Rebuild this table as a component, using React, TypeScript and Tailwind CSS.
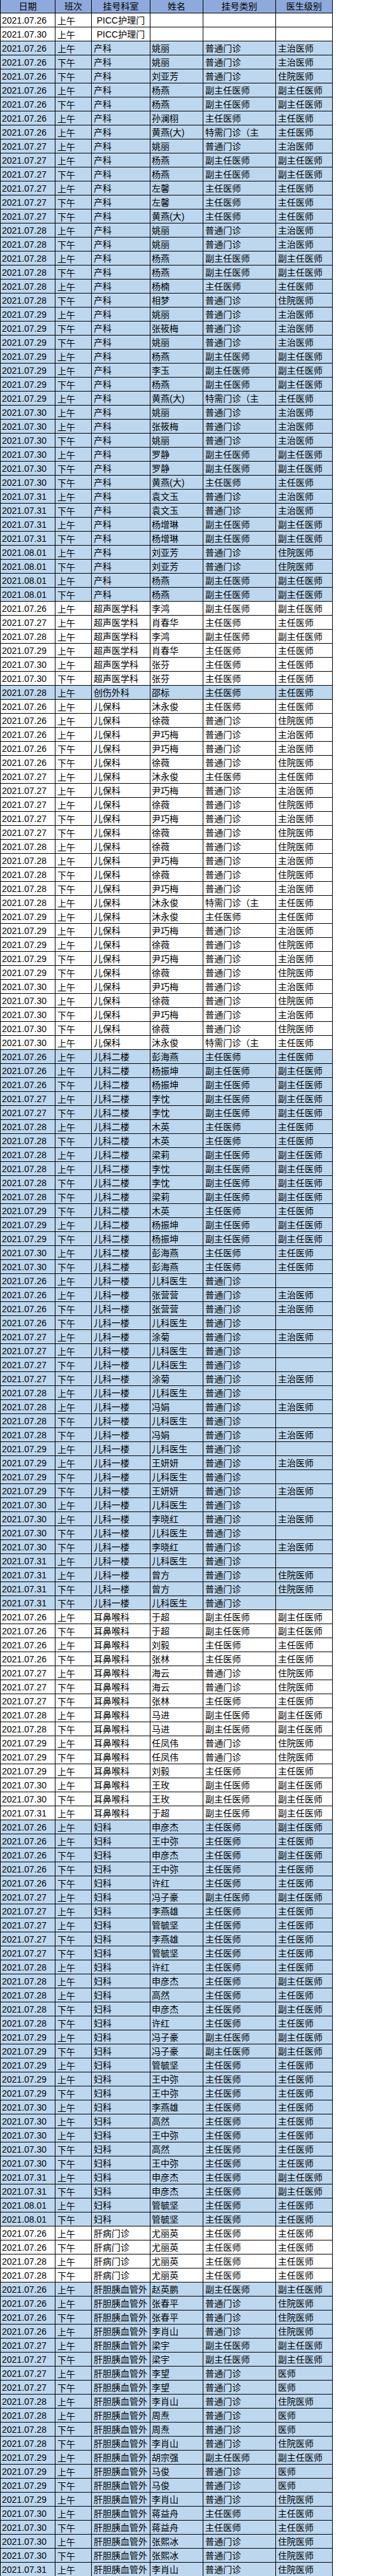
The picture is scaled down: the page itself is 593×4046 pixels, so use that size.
import React from "react";

const TYPE: Record<string, string> = {
  P: "普通门诊",
  F: "副主任医师",
  Z: "主任医师",
  T: "特需门诊（主",
  "-": "",
};
const LEVEL: Record<string, string> = {
  C: "主治医师",
  Y: "住院医师",
  F: "副主任医师",
  Z: "主任医师",
  D: "医师",
  "-": "",
};

const RAW = `07.26,上,PICC护理门,,-,-
07.30,上,PICC护理门,,-,-
07.26,上,产科,姚丽,P,C
07.26,下,产科,姚丽,P,C
07.26,下,产科,刘亚芳,P,Y
07.26,上,产科,杨燕,F,F
07.26,下,产科,杨燕,F,F
07.26,上,产科,孙澜栩,Z,Z
07.26,上,产科,黄燕(大),T,Z
07.27,上,产科,姚丽,P,C
07.27,上,产科,杨燕,F,F
07.27,下,产科,杨燕,F,F
07.27,上,产科,左馨,Z,Z
07.27,下,产科,左馨,Z,Z
07.27,下,产科,黄燕(大),Z,Z
07.28,上,产科,姚丽,P,C
07.28,下,产科,姚丽,P,C
07.28,上,产科,杨燕,F,F
07.28,下,产科,杨燕,F,F
07.28,上,产科,杨楠,Z,Z
07.28,下,产科,相梦,P,Y
07.29,上,产科,姚丽,P,C
07.29,下,产科,张筱梅,P,C
07.29,下,产科,姚丽,P,C
07.29,上,产科,杨燕,F,F
07.29,上,产科,李玉,F,F
07.29,下,产科,杨燕,F,F
07.29,上,产科,黄燕(大),T,Z
07.30,上,产科,姚丽,P,C
07.30,上,产科,张筱梅,P,C
07.30,下,产科,姚丽,P,C
07.30,上,产科,罗静,F,F
07.30,下,产科,罗静,F,F
07.30,下,产科,黄燕(大),Z,Z
07.31,上,产科,袁文玉,P,C
07.31,下,产科,袁文玉,P,C
07.31,上,产科,杨增琳,F,F
07.31,下,产科,杨增琳,F,F
08.01,上,产科,刘亚芳,P,Y
08.01,下,产科,刘亚芳,P,Y
08.01,上,产科,杨燕,F,F
08.01,下,产科,杨燕,F,F
07.26,上,超声医学科,李鸿,F,F
07.27,上,超声医学科,肖春华,Z,Z
07.28,上,超声医学科,李鸿,F,F
07.29,上,超声医学科,肖春华,Z,Z
07.30,上,超声医学科,张芬,Z,Z
07.30,下,超声医学科,张芬,Z,Z
07.28,上,创伤外科,邵标,Z,Z
07.26,上,儿保科,沐永俊,Z,Z
07.26,上,儿保科,徐薇,P,Y
07.26,上,儿保科,尹巧梅,P,C
07.26,下,儿保科,尹巧梅,P,C
07.26,下,儿保科,徐薇,P,Y
07.27,上,儿保科,沐永俊,Z,Z
07.27,上,儿保科,尹巧梅,P,C
07.27,上,儿保科,徐薇,P,Y
07.27,下,儿保科,尹巧梅,P,C
07.27,下,儿保科,徐薇,P,Y
07.28,上,儿保科,徐薇,P,Y
07.28,上,儿保科,尹巧梅,P,C
07.28,下,儿保科,徐薇,P,Y
07.28,下,儿保科,尹巧梅,P,C
07.28,上,儿保科,沐永俊,T,Z
07.29,上,儿保科,沐永俊,Z,Z
07.29,上,儿保科,尹巧梅,P,C
07.29,上,儿保科,徐薇,P,Y
07.29,下,儿保科,尹巧梅,P,C
07.29,下,儿保科,徐薇,P,Y
07.30,上,儿保科,尹巧梅,P,C
07.30,上,儿保科,徐薇,P,Y
07.30,下,儿保科,尹巧梅,P,C
07.30,下,儿保科,徐薇,P,Y
07.30,上,儿保科,沐永俊,T,Z
07.26,上,儿科二楼,彭海燕,Z,Z
07.26,上,儿科二楼,杨振坤,F,F
07.26,下,儿科二楼,杨振坤,F,F
07.27,上,儿科二楼,李忱,F,F
07.27,下,儿科二楼,李忱,F,F
07.28,上,儿科二楼,木英,Z,Z
07.28,下,儿科二楼,木英,Z,Z
07.28,上,儿科二楼,梁莉,F,F
07.28,上,儿科二楼,李忱,F,F
07.28,下,儿科二楼,李忱,F,F
07.28,下,儿科二楼,梁莉,F,F
07.29,下,儿科二楼,木英,Z,Z
07.29,上,儿科二楼,杨振坤,F,F
07.29,下,儿科二楼,杨振坤,F,F
07.30,上,儿科二楼,彭海燕,Z,Z
07.30,下,儿科二楼,彭海燕,Z,Z
07.26,上,儿科一楼,儿科医生,P,-
07.26,上,儿科一楼,张营营,P,C
07.26,下,儿科一楼,张营营,P,C
07.26,下,儿科一楼,儿科医生,P,-
07.27,上,儿科一楼,涂菊,P,C
07.27,上,儿科一楼,儿科医生,P,-
07.27,下,儿科一楼,儿科医生,P,-
07.27,下,儿科一楼,涂菊,P,C
07.28,上,儿科一楼,儿科医生,P,-
07.28,上,儿科一楼,冯娟,P,C
07.28,下,儿科一楼,儿科医生,P,-
07.28,下,儿科一楼,冯娟,P,C
07.29,上,儿科一楼,儿科医生,P,-
07.29,上,儿科一楼,王妍妍,P,C
07.29,下,儿科一楼,儿科医生,P,-
07.29,下,儿科一楼,王妍妍,P,C
07.30,上,儿科一楼,儿科医生,P,-
07.30,上,儿科一楼,李晓红,P,C
07.30,下,儿科一楼,儿科医生,P,-
07.30,下,儿科一楼,李晓红,P,C
07.31,上,儿科一楼,儿科医生,P,-
07.31,上,儿科一楼,曾方,P,Y
07.31,下,儿科一楼,曾方,P,Y
07.31,下,儿科一楼,儿科医生,P,-
07.26,上,耳鼻喉科,于超,F,F
07.26,下,耳鼻喉科,于超,F,F
07.26,上,耳鼻喉科,刘毅,Z,Z
07.26,下,耳鼻喉科,张林,Z,Z
07.27,上,耳鼻喉科,海云,P,Y
07.27,下,耳鼻喉科,海云,P,Y
07.27,下,耳鼻喉科,张林,Z,Z
07.28,上,耳鼻喉科,马进,F,F
07.28,下,耳鼻喉科,马进,F,F
07.29,上,耳鼻喉科,任凤伟,P,Y
07.29,下,耳鼻喉科,任凤伟,P,Y
07.29,上,耳鼻喉科,刘毅,Z,Z
07.30,上,耳鼻喉科,王玫,F,F
07.30,下,耳鼻喉科,王玫,F,F
07.31,上,耳鼻喉科,于超,F,F
07.26,上,妇科,申彦杰,Z,F
07.26,上,妇科,王中弥,Z,Z
07.26,下,妇科,申彦杰,Z,F
07.26,下,妇科,王中弥,Z,Z
07.26,下,妇科,许红,Z,Z
07.27,上,妇科,冯子豪,F,F
07.27,上,妇科,李燕雄,Z,Z
07.27,上,妇科,管毓坚,Z,Z
07.27,下,妇科,李燕雄,Z,Z
07.27,下,妇科,管毓坚,Z,Z
07.28,上,妇科,许红,Z,Z
07.28,上,妇科,申彦杰,Z,F
07.28,上,妇科,高然,Z,Z
07.28,下,妇科,申彦杰,Z,F
07.28,下,妇科,许红,Z,Z
07.29,上,妇科,冯子豪,F,F
07.29,下,妇科,冯子豪,F,F
07.29,上,妇科,管毓坚,Z,Z
07.29,上,妇科,王中弥,Z,Z
07.29,下,妇科,王中弥,Z,Z
07.30,上,妇科,李燕雄,Z,Z
07.30,上,妇科,高然,Z,Z
07.30,上,妇科,王中弥,Z,Z
07.30,下,妇科,高然,Z,Z
07.30,下,妇科,王中弥,Z,Z
07.31,上,妇科,申彦杰,Z,F
07.31,下,妇科,申彦杰,Z,F
08.01,上,妇科,管毓坚,Z,Z
08.01,下,妇科,管毓坚,Z,Z
07.26,上,肝病门诊,尤丽英,Z,Z
07.26,下,肝病门诊,尤丽英,Z,Z
07.28,上,肝病门诊,尤丽英,Z,Z
07.28,下,肝病门诊,尤丽英,Z,Z
07.26,上,肝胆胰血管外,赵英鹏,F,F
07.26,上,肝胆胰血管外,张春平,P,Y
07.26,下,肝胆胰血管外,张春平,P,Y
07.26,上,肝胆胰血管外,李肖山,P,Y
07.27,上,肝胆胰血管外,梁宇,F,F
07.27,下,肝胆胰血管外,梁宇,F,F
07.27,上,肝胆胰血管外,李望,P,D
07.27,下,肝胆胰血管外,李望,P,D
07.28,上,肝胆胰血管外,李肖山,P,Y
07.28,上,肝胆胰血管外,周焘,P,D
07.28,下,肝胆胰血管外,周焘,P,D
07.28,下,肝胆胰血管外,李肖山,P,Y
07.29,上,肝胆胰血管外,胡宗强,F,F
07.29,上,肝胆胰血管外,马俊,P,D
07.29,下,肝胆胰血管外,马俊,P,D
07.29,上,肝胆胰血管外,李肖山,P,Y
07.30,上,肝胆胰血管外,蒋益舟,Z,Z
07.30,下,肝胆胰血管外,蒋益舟,Z,Z
07.30,上,肝胆胰血管外,张熙冰,P,Y
07.30,下,肝胆胰血管外,张熙冰,P,Y
07.31,上,肝胆胰血管外,李肖山,P,Y`;

const BLUE = new Set(["产科", "创伤外科", "儿科二楼", "儿科一楼", "妇科", "肝胆胰血管外"]);

type Row = { date: string; shift: string; dept: string; name: string; type: string; level: string };

const rows: Row[] = RAW.split("\n").map((line) => {
  const [d, s, dept, name, t, l] = line.split(",");
  return {
    date: "2021." + d,
    shift: s + "午",
    dept,
    name,
    type: TYPE[t] ?? "",
    level: LEVEL[l] ?? "",
  };
});

const FONT = { fontFamily: "'Liberation Sans', 'Noto Sans CJK SC', sans-serif" };

export default function App() {
  return (
    <div className="w-[593px] bg-white text-black text-[14px] leading-none" style={FONT}>
      <div className="w-[522px] border-l border-black">
        <div className="flex h-[21px] border-b border-black bg-[#8EA9DB]">
          <div className="w-[86px] border-r border-black flex items-center justify-center">日期</div>
          <div className="w-[57px] border-r border-black flex items-center justify-center">班次</div>
          <div className="w-[92px] border-r border-black flex items-center justify-center">挂号科室</div>
          <div className="w-[83px] border-r border-black flex items-center justify-center">姓名</div>
          <div className="w-[114px] border-r border-black flex items-center justify-center">挂号类别</div>
          <div className="w-[89px] border-r border-black flex items-center justify-center">医生级别</div>
        </div>
        {rows.map((r, i) => {
          const picc = r.dept.startsWith("PICC");
          return (
            <div
              key={i}
              className={
                "flex h-[22px] border-b border-black whitespace-nowrap " +
                (BLUE.has(r.dept) ? "bg-[#BDD7EE]" : "bg-white")
              }
            >
              <div className="w-[86px] border-r border-black flex items-center pl-[2px]">{r.date}</div>
              <div className="w-[57px] border-r border-black flex items-center pl-[3px] pt-[2px]">{r.shift}</div>
              <div
                className={
                  "w-[92px] border-r border-black flex items-center overflow-hidden " +
                  (picc ? "justify-center" : "pl-[3px]")
                }
              >
                {r.dept}
              </div>
              <div className="w-[83px] border-r border-black flex items-center pl-[2px] overflow-hidden">{r.name}</div>
              <div className="w-[114px] border-r border-black flex items-center pl-[3px] overflow-hidden">{r.type}</div>
              <div className="w-[89px] border-r border-black flex items-center pl-[3px] overflow-hidden">{r.level}</div>
            </div>
          );
        })}
      </div>
    </div>
  );
}
